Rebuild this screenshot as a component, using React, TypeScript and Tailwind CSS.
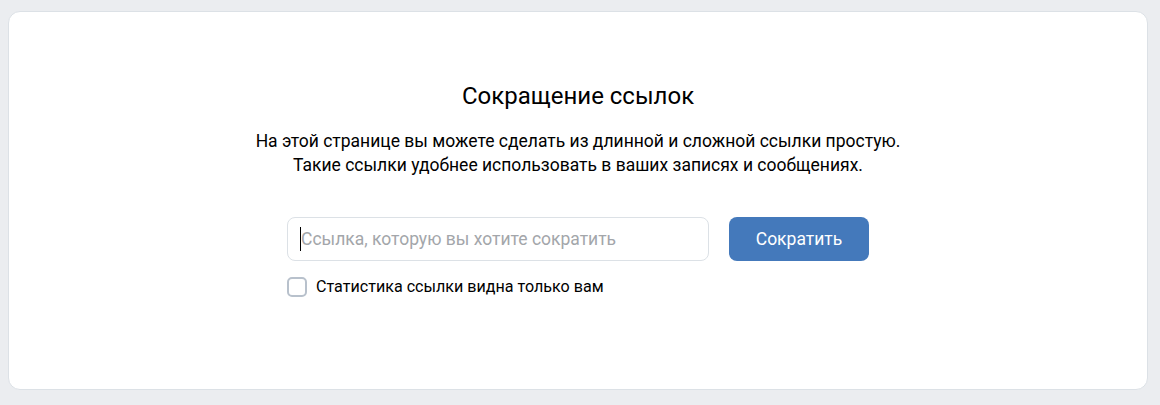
import { useState } from "react";

export default function App() {
  const [url, setUrl] = useState("");
  const [privateStats, setPrivateStats] = useState(false);

  return (
    <div
      className="min-h-[405px] bg-[#ebedf0] pt-[11px] pl-2 pr-3 pb-[15px]"
      style={{ fontFamily: "Roboto, 'Liberation Sans', sans-serif" }}
    >
      <div className="flex h-[379px] flex-col items-center rounded-xl border border-[#dce1e6] bg-white pt-[71px]">
        <h1 className="text-[24px] leading-[26px] text-black">Сокращение ссылок</h1>
        <p className="mt-[20px] text-center text-[17.5px] leading-6 text-black">
          На этой странице вы можете сделать из длинной и сложной ссылки простую.
          <br />
          Такие ссылки удобнее использовать в ваших записях и сообщениях.
        </p>

        <div className="mt-[40px] flex flex-col">
          <div className="flex gap-5">
            <div className="relative">
              <input
                value={url}
                onChange={(e) => setUrl(e.target.value)}
                placeholder="Ссылка, которую вы хотите сократить"
                className="h-11 w-[422px] rounded-lg border border-[#dce1e6] bg-white pl-[13px] pr-3 text-[17.5px] text-black outline-none placeholder:text-[#a3a6aa]"
              />
              {url === "" && (
                <span className="absolute left-[13px] top-[10px] h-[24px] w-px bg-black" />
              )}
            </div>
            <button className="h-11 w-[140px] rounded-lg bg-[#4479bb] text-[17.5px] text-white">
              Сократить
            </button>
          </div>

          <label className="mt-[14px] flex cursor-pointer items-center gap-[9px]">
            <input
              type="checkbox"
              checked={privateStats}
              onChange={(e) => setPrivateStats(e.target.checked)}
              className="sr-only"
            />
            <span className="h-5 w-5 rounded-[5px] border-2 border-[#b8c1cc] bg-white" />
            <span className="text-[16.1px] text-black">Статистика ссылки видна только вам</span>
          </label>
        </div>
      </div>
    </div>
  );
}
